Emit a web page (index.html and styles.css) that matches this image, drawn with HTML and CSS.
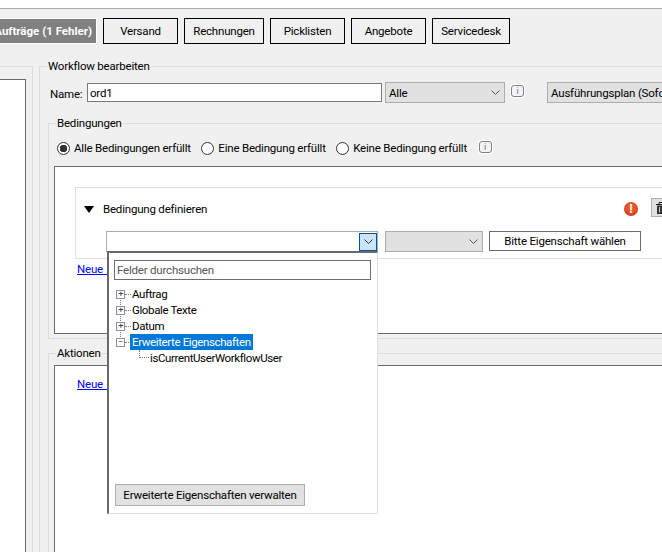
FILE: index.html
```html
<!DOCTYPE html>
<html lang="de">
<head>
    <meta charset="UTF-8">
    <meta name="viewport" content="width=device-width, initial-scale=1.0">
    <title>Workflow bearbeiten</title>
    <link rel="stylesheet" href="styles.css">
</head>
<body>
    <div class="top-strip"></div>
    <div class="tabs">
        <button class="tab tab-active">Aufträge (1 Fehler)</button>
        <button class="tab tab-small">Versand</button>
        <button class="tab tab-rechnungen">Rechnungen</button>
        <button class="tab tab-small">Picklisten</button>
        <button class="tab tab-small">Angebote</button>
        <button class="tab tab-service">Servicedesk</button>
    </div>
    <div class="main">
        <div class="left-group">
            <div class="left-list"></div>
        </div>
        <fieldset class="group workflow">
            <legend>Workflow bearbeiten</legend>
            <div class="name-row">
                <label class="name-label">Name:</label>
                <input class="name-input" type="text" value="ord1">
                <div class="select select-all">
                    <span>Alle</span>
                    <svg class="chevron" width="9" height="5" viewBox="0 0 9 5"><path d="M0.5 0.5 4.5 4.5 8.5 0.5" fill="none" stroke="#555"/></svg>
                </div>
                <span class="info">i</span>
                <button class="plan">Ausführungsplan (Sofort)</button>
            </div>
            <fieldset class="group conditions">
                <legend>Bedingungen</legend>
                <div class="radio-row">
                    <label class="radio radio-on"><i></i>Alle Bedingungen erfüllt</label>
                    <label class="radio"><i></i>Eine Bedingung erfüllt</label>
                    <label class="radio"><i></i>Keine Bedingung erfüllt</label>
                    <span class="info">i</span>
                </div>
                <div class="panel condition-panel">
                    <div class="condition">
                        <div class="condition-head">
                            <span class="triangle"></span>
                            <span class="condition-title">Bedingung definieren</span>
                            <span class="error-icon">!</span>
                            <span class="trash">
                                <svg width="10" height="12" viewBox="0 0 10 12"><path d="M0 2.5H10M3 2.5V0.5H7V2.5" fill="none" stroke="#222"/><path d="M1 3.5H9V12H1Z" fill="#333"/><path d="M3.5 5V10.5M6.5 5V10.5" stroke="#ccc"/></svg>
                            </span>
                        </div>
                        <div class="condition-fields">
                            <div class="select field-select">
                                <span class="arrow-btn">
                                    <svg width="9" height="5" viewBox="0 0 9 5"><path d="M0.5 0.5 4.5 4.5 8.5 0.5" fill="none" stroke="#333"/></svg>
                                </span>
                            </div>
                            <div class="select op-select">
                                <svg class="chevron" width="9" height="5" viewBox="0 0 9 5"><path d="M0.5 0.5 4.5 4.5 8.5 0.5" fill="none" stroke="#555"/></svg>
                            </div>
                            <button class="value-btn">Bitte Eigenschaft wählen</button>
                        </div>
                    </div>
                    <a class="new-link" href="#">Neue Bedingung</a>

                    <div class="popup">
                        <input class="search" type="text" placeholder="Felder durchsuchen">
                        <ul class="tree">
                            <li><span class="box">+</span><span class="dots"></span>Auftrag</li>
                            <li><span class="box">+</span><span class="dots"></span>Globale Texte</li>
                            <li><span class="box">+</span><span class="dots"></span>Datum</li>
                            <li><span class="box">−</span><span class="dots"></span><span class="selected">Erweiterte Eigenschaften</span></li>
                            <li class="leaf"><span class="elbow"></span>isCurrentUserWorkflowUser</li>
                        </ul>
                        <button class="manage">Erweiterte Eigenschaften verwalten</button>
                    </div>
                </div>
            </fieldset>
            <fieldset class="group actions">
                <legend>Aktionen</legend>
                <div class="panel action-panel">
                    <a class="new-link" href="#">Neue Aktion</a>
                </div>
            </fieldset>
        </fieldset>
    </div>
</body>
</html>
```

FILE: styles.css
```css
html, body {
    height: 100%;
}
body {
    margin: 0;
    overflow: hidden;
    background-color: #f0f0f0;
    font-family: Roboto, "Liberation Sans", sans-serif;
    font-size: 11.5px;
    letter-spacing: -0.2px;
    color: #000;
}
button, input {
    font: inherit;
    letter-spacing: inherit;
    color: inherit;
    margin: 0;
    white-space: nowrap;
}
.top-strip {
    height: 8px;
    background-color: #fff;
    border-bottom: 1px solid #a9a9a9;
}

/* Tabs */
.tabs {
    display: flex;
    gap: 6px;
    padding-top: 9px;
    height: 26px;
    margin-left: -13px;
}
.tab {
    height: 26px;
    padding: 0;
    flex-shrink: 0;
    background-color: #f0f0f0;
    border: 1px solid #000;
}
.tab-active {
    width: 110px;
    padding-right: 4px;
    text-align: right;
    letter-spacing: 0;
    background-color: #808080;
    border-color: #fff;
    color: #fff;
    font-weight: bold;
}
.tab-small {
    width: 75px;
}
.tab-rechnungen {
    width: 80px;
}
.tab-service {
    width: 78px;
}

/* Gruppen */
.main {
    display: flex;
    margin-top: 22px;
    height: 486px;
}
.left-group {
    width: 33px;
    margin-right: 6px;
    flex-shrink: 0;
    border-top: 1px solid #dcdcdc;
    border-right: 1px solid #dcdcdc;
    box-sizing: border-box;
    padding: 12px 6px 0 0;
}
.left-list {
    height: 100%;
    background-color: #fff;
    border-top: 1px solid #696969;
    border-right: 1px solid #696969;
}
.group {
    border: 1px solid #dcdcdc;
    border-radius: 0;
    margin: 0;
    padding: 0;
    min-width: 0;
}
.group legend {
    margin-left: 2px;
    padding: 0 1px;
    line-height: 14px;
}
.workflow {
    width: 660px;
    flex-shrink: 0;
    margin-top: -7px;
    padding: 0 0 0 8px;
    height: 560px;
}
.group.workflow > legend {
    margin-left: -1px;
}

/* Name */
.name-row {
    display: flex;
    align-items: center;
    height: 21px;
    margin-top: 9px;
}
.name-label {
    width: 37px;
    margin-left: 2px;
    margin-top: 2px;
}
.name-input {
    width: 295px;
    height: 19px;
    box-sizing: border-box;
    border: 1px solid #7a7a7a;
    padding: 0 2px;
    margin-right: 3px;
    background-color: #fff;
}
.select {
    display: flex;
    align-items: center;
    box-sizing: border-box;
    border: 1px solid #adadad;
    background-color: #e1e1e1;
}
.chevron {
    margin-left: auto;
}
.select-all {
    width: 120px;
    height: 21px;
    padding: 0 4px 0 3px;
}
.info {
    display: inline-block;
    width: 13px;
    height: 12px;
    box-sizing: border-box;
    border: 1px solid #808080;
    border-radius: 3px;
    background-color: #f4f4f4;
    box-shadow: 0 0 0 1px #fff;
    color: #4a78a8;
    font-size: 9px;
    line-height: 10px;
    text-align: center;
    flex-shrink: 0;
}
.name-row .info {
    margin: 0 23px 4px 6px;
}
.plan {
    width: 160px;
    height: 21px;
    flex-shrink: 0;
    padding: 0 0 0 3px;
    text-align: left;
    background-color: #e1e1e1;
    border: 1px solid #adadad;
}

/* Bedingungen */
.conditions {
    margin-top: 13px;
    padding: 0 0 0 5px;
    height: 223px;
    box-sizing: border-box;
}
.radio-row {
    display: flex;
    align-items: center;
    height: 20px;
    margin-top: 8px;
    margin-left: 3px;
}
.radio {
    display: flex;
    align-items: center;
    margin-right: 10.5px;
}
.radio i {
    width: 13px;
    height: 13px;
    box-sizing: border-box;
    border: 1px solid #333;
    border-radius: 50%;
    background-color: #fff;
    margin-right: 4px;
}
.radio-on i {
    background: radial-gradient(circle, #333 0 3.5px, #fff 4px);
}
.radio-row .info {
    margin: 0 0 2px 1px;
}
.panel {
    position: relative;
    background-color: #fff;
    border: 1px solid #696969;
    border-right: 0;
}
.condition-panel {
    height: 168px;
    margin-top: 8px;
    padding: 20px 0 0 20px;
    box-sizing: border-box;
}
.condition {
    border: 1px solid #e0e0e0;
    border-right: 0;
    height: 72px;
    box-sizing: border-box;
}
.condition-head {
    display: flex;
    align-items: center;
    height: 20px;
    padding: 11px 0 0 8px;
}
.triangle {
    width: 0;
    height: 0;
    border-left: 5px solid transparent;
    border-right: 5px solid transparent;
    border-top: 7px solid #000;
    margin-right: 9px;
    flex-shrink: 0;
}
.condition-title {
    width: 521px;
    flex-shrink: 0;
}
.error-icon {
    width: 14px;
    height: 14px;
    border-radius: 50%;
    background: radial-gradient(circle at 50% 40%, #f0552a 35%, #bb2a0c);
    color: #fff;
    font-size: 13px;
    font-weight: bold;
    line-height: 14px;
    text-align: center;
    flex-shrink: 0;
}
.trash {
    display: flex;
    justify-content: center;
    align-items: center;
    width: 20px;
    height: 19px;
    margin: -3px 0 0 13px;
    flex-shrink: 0;
    background-color: #e1e1e1;
    border: 1px solid #adadad;
    box-sizing: border-box;
}
.condition-fields {
    display: flex;
    margin: 12px 0 0 30px;
    gap: 7px;
}
.field-select {
    width: 272px;
    height: 21px;
    background-color: #fff;
    justify-content: flex-end;
}
.arrow-btn {
    display: flex;
    align-items: center;
    justify-content: center;
    width: 18px;
    height: 18px;
    box-sizing: border-box;
    border: 1px solid #005499;
    background-color: #cce4f7;
}
.op-select {
    width: 98px;
    height: 21px;
    padding-right: 4px;
}
.value-btn {
    width: 152px;
    height: 20px;
    margin-left: -1px;
    padding: 0;
    background-color: #fff;
    border: 1px solid #6d6d6d;
}
.new-link {
    display: block;
    color: #0000ff;
    margin: 3px 0 0 2px;
    line-height: 14px;
    word-spacing: 3px;
}

/* Aufklappliste */
.popup {
    position: absolute;
    left: 52px;
    top: 84px;
    width: 271px;
    height: 263px;
    box-sizing: border-box;
    display: flex;
    flex-direction: column;
    background-color: #fff;
    border-top: 2px solid #696969;
    border-left: 2px solid #696969;
    border-right: 1px solid #e0e0e0;
    border-bottom: 1px solid #e0e0e0;
    padding: 7px 6px 0 5px;
    z-index: 5;
}
.search {
    width: 257px;
    height: 20px;
    box-sizing: border-box;
    flex-shrink: 0;
    border: 1px solid #6d6d6d;
    padding: 0 2px;
    background-color: #fff;
}
.search::placeholder {
    color: #555;
}
.tree {
    list-style-type: none;
    margin: 6px 0 0 2px;
    padding: 0;
}
.tree li {
    display: flex;
    align-items: center;
    height: 16px;
    position: relative;
    letter-spacing: -0.38px;
}
.tree li + li::before {
    content: "";
    position: absolute;
    left: 4px;
    top: -4px;
    height: 7px;
    border-left: 1px dotted #808080;
}
.tree .leaf::before {
    display: none;
}
.box {
    width: 9px;
    height: 9px;
    box-sizing: border-box;
    border: 1px solid #919191;
    color: #22407a;
    font-size: 9px;
    line-height: 7px;
    text-align: center;
    flex-shrink: 0;
}
.dots {
    width: 6px;
    border-top: 1px dotted #808080;
    margin-right: 1px;
}
.selected {
    margin-left: -2px;
    padding: 0 2px;
    background-color: #0078d7;
    color: #fff;
    line-height: 16px;
}
.tree .leaf {
    padding-left: 34px;
}
.elbow {
    position: absolute;
    left: 23px;
    top: 0;
    width: 10px;
    height: 8px;
    box-sizing: border-box;
    border-left: 1px dotted #808080;
    border-bottom: 1px dotted #808080;
}
.manage {
    margin: auto 0 7px 1px;
    width: 190px;
    height: 22px;
    padding: 0;
    background-color: #e1e1e1;
    border: 1px solid #adadad;
}

/* Aktionen */
.actions {
    margin-top: 7px;
    padding: 0 0 0 5px;
    height: 300px;
}
.action-panel {
    height: 290px;
    margin-top: 5px;
    padding: 8px 0 0 20px;
    box-sizing: border-box;
}
```
